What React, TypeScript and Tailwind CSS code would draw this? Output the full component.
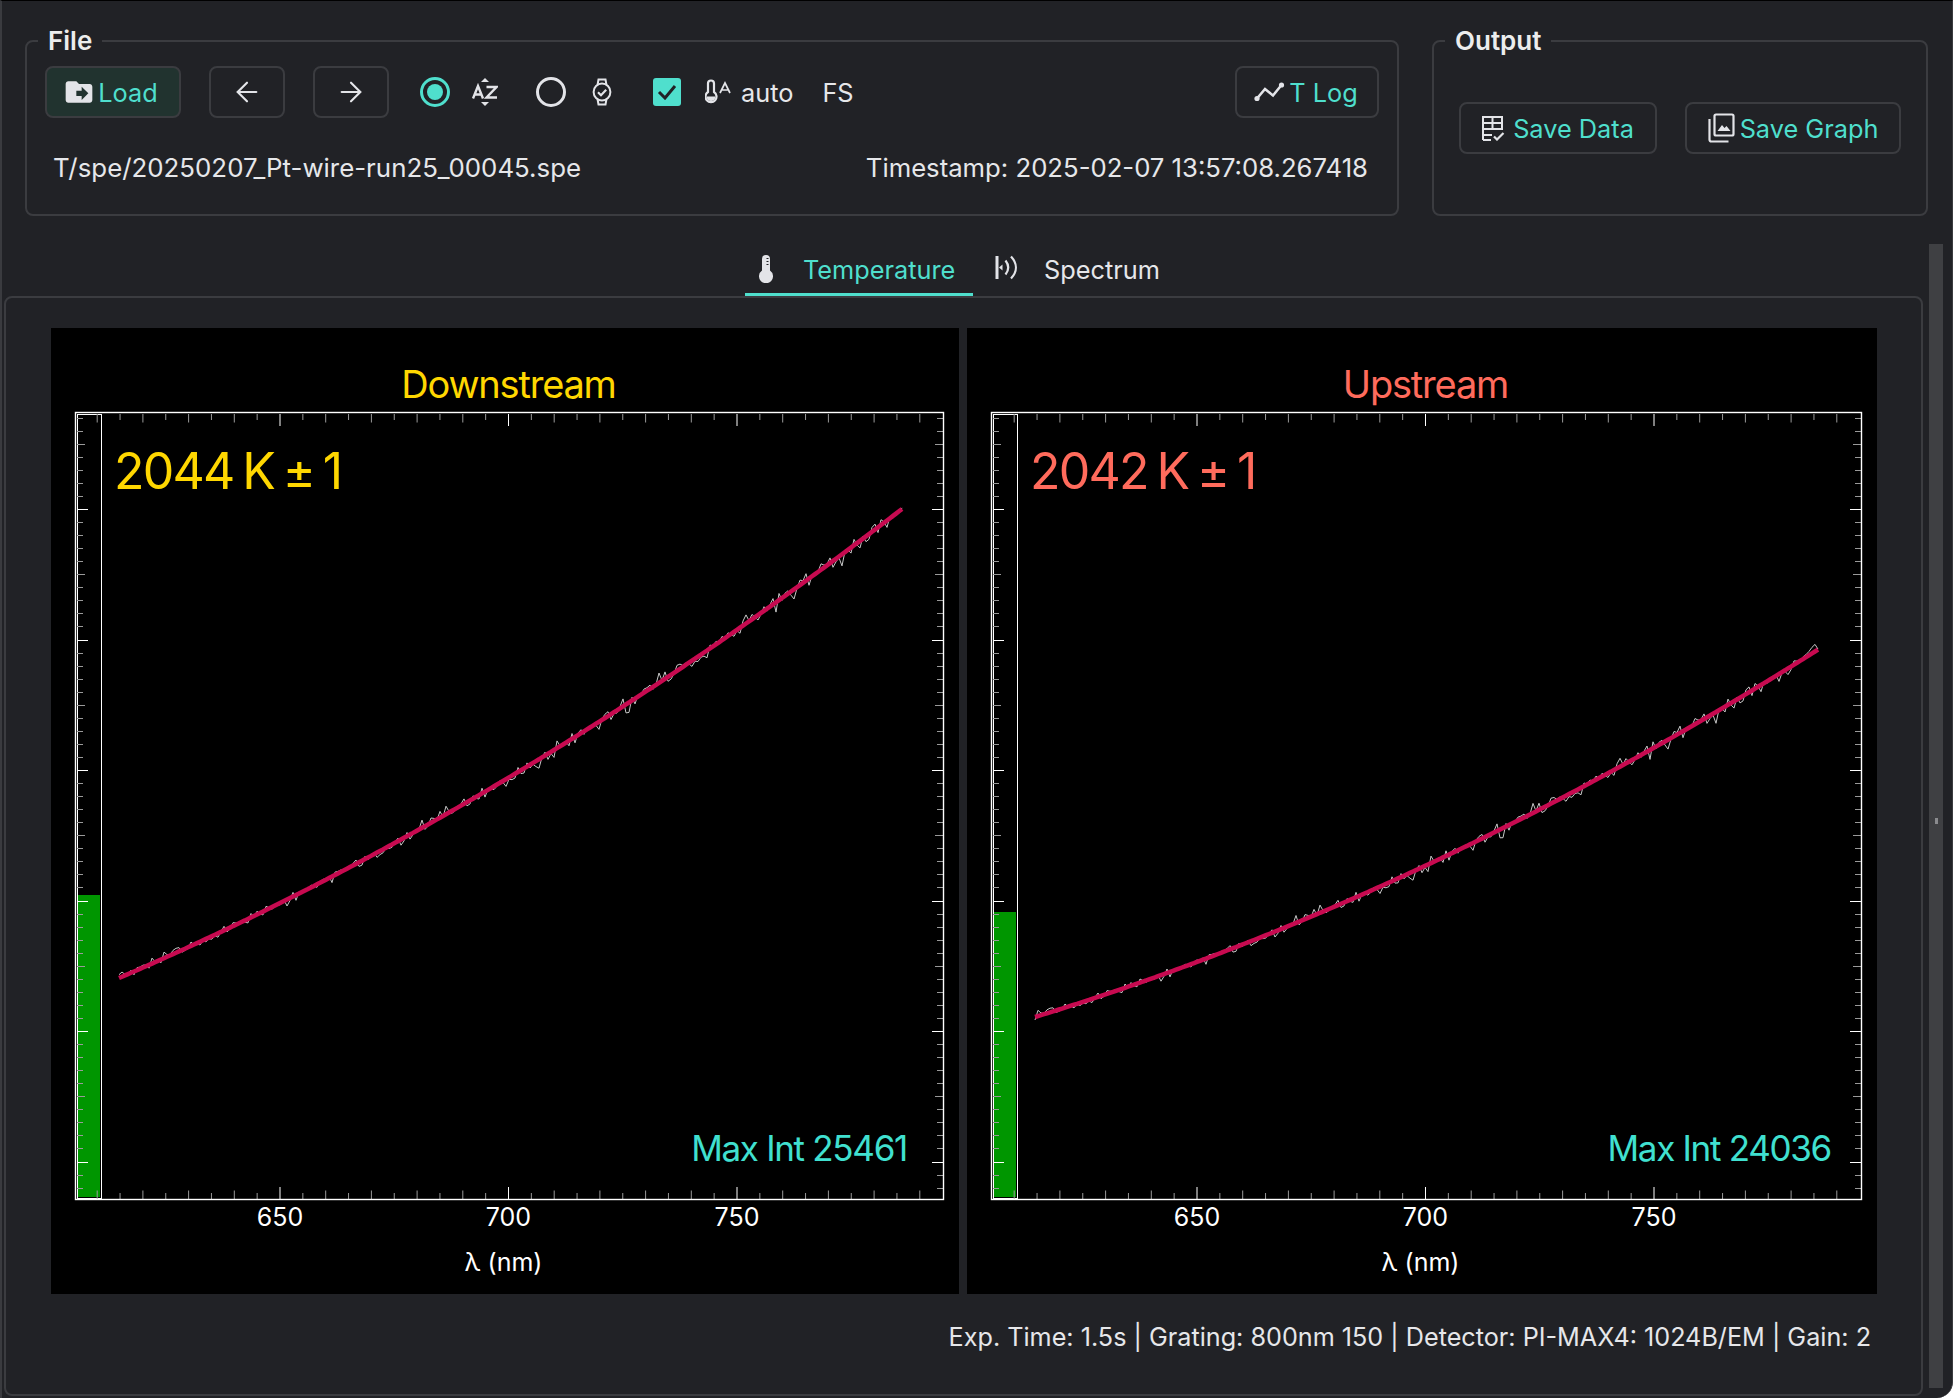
import { ArrowLeft, ArrowRight } from 'lucide-react'
import { MdDriveFileMove } from 'react-icons/md'
import type { ReactNode } from 'react'

// x position of a wavelength in plot coordinates
const nmToX = (nm: number, base: number) => base + (nm - 650) * 4.57

const noise = (i: number) => {
  const s = Math.sin(i * 12.9898) * 43758.5453
  return s - Math.floor(s) - 0.5
}

interface PlotProps {
  title: string
  color: string
  temp: string
  maxInt: string
  maxIntRight: number
  width: number
  frameRight: number
  tick650: number
  gaugeTop: number
  curve: { x0: number; y0: number; x1: number; y1: number; sag: number }
  seed: number
}

function Plot({ title, color, temp, maxInt, maxIntRight, width, frameRight, tick650, gaugeTop, curve, seed }: PlotProps) {
  const top = 84
  const bottom = 871
  const left = 24

  const fit = []
  const raw = []
  for (let x = curve.x0; x <= curve.x1; x += 3) {
    const t = (x - curve.x0) / (curve.x1 - curve.x0)
    const y = curve.y0 + (curve.y1 - curve.y0) * t + curve.sag * 4 * t * (1 - t)
    fit.push(`${x},${y.toFixed(1)}`)
    const big = noise(x + seed + 7) > 0.25 ? 1.6 : 1
    raw.push(`${x},${(y + 12 * big * (0.6 + 0.7 * t) * noise(x + seed)).toFixed(1)}`)
  }

  const xTicks = []
  for (let nm = 610; nm <= 790; nm += 5) {
    const x = nmToX(nm, tick650)
    const kind = nm % 50 === 0 ? 2 : nm % 10 === 0 ? 1 : 0
    const len = [6, 8.5, 12][kind]
    const stroke = kind === 2 ? '#fff' : '#9a9a9a'
    xTicks.push(<path key={nm} d={`M${x} ${bottom}v${-len}M${x} ${top + 2}v${len}`} stroke={stroke} fill="none" />)
  }

  const yTicks = []
  for (let k = -7; k <= 52; k++) {
    const y = Math.round(181 + k * 13.05) + 0.5
    const kind = (k + 100) % 10 === 0 ? 2 : (k + 100) % 5 === 0 ? 1 : 0
    const len = [6, 8, 11][kind]
    const stroke = kind === 2 ? '#fff' : '#9a9a9a'
    yTicks.push(<path key={k} d={`M${left + 2} ${y}h${len}M${frameRight - 1} ${y}h${-len}`} stroke={stroke} fill="none" />)
  }

  const center = (left + frameRight) / 2
  const font = { fontFamily: 'Inter, sans-serif' }

  return (
    <svg width={width} height={966} className="block bg-black shrink-0" style={font}>
      <text x={center - 1} y={70} textAnchor="middle" fontSize={38} fill={color} letterSpacing={-1.2}>{title}</text>

      <rect x={left + 3} y={gaugeTop} width={22} height={bottom - 2 - gaugeTop} fill="#009600" />
      <rect x={left + 2.5} y={top + 2.5} width={24} height={bottom - top - 3} fill="none" stroke="#fff" />
      {xTicks}
      {yTicks}
      <rect x={left + 0.5} y={top + 0.5} width={frameRight - left - 1} height={bottom - top} fill="none" stroke="#fff" strokeWidth={1.4} />

      <polyline points={raw.join(' ')} fill="none" stroke="#c8c8c8" strokeWidth={1} />
      <polyline points={fit.join(' ')} fill="none" stroke="#c70a50" strokeWidth={4.5} />

      <text x={63} y={161} fontSize={50} fill={color} letterSpacing={-1.8} wordSpacing={-3.5}>{temp}</text>
      <text x={maxIntRight} y={833} textAnchor="end" fontSize={35} fill="#40e0d0" letterSpacing={-1.3}>{maxInt}</text>

      {[650, 700, 750].map(nm => (
        <text key={nm} x={nmToX(nm, tick650)} y={898} textAnchor="middle" fontSize={25} fill="#fff">{nm}</text>
      ))}
      <text x={center - 6} y={943} textAnchor="middle" fontSize={25} fill="#fff">λ (nm)</text>
    </svg>
  )
}

function OutlineButton({ children, className = '' }: { children: ReactNode; className?: string }) {
  return (
    <button className={`h-[52px] flex items-center justify-center rounded-lg border-2 border-[#3b3c40] text-[#4fdfcd] shrink-0 ${className}`}>
      {children}
    </button>
  )
}

function Radio({ checked }: { checked?: boolean }) {
  return (
    <span className={`w-[30px] h-[30px] rounded-full border-[3px] flex items-center justify-center shrink-0 ${checked ? 'border-[#4fdfcd]' : 'border-[#e3e4e8]'}`}>
      {checked && <span className="w-4 h-4 rounded-full bg-[#4fdfcd]" />}
    </span>
  )
}

const SortAzIcon = () => (
  <svg width="26" height="28" viewBox="0 0 26 28" className="ml-[22px] shrink-0" fill="none" stroke="#e3e4e8" strokeWidth="2.4">
    <path d="M13 0l4 4H9zM13 28l-4-4h8z" fill="#e3e4e8" stroke="none" />
    <path d="M1 20.500L6 8l5 12.500M3 16.500h6" />
    <path d="M14.500 9h10l-10 10.500h10.500" />
  </svg>
)

const WatchCheckIcon = () => (
  <svg width="20" height="28" viewBox="0 0 20 28" className="ml-[26px] shrink-0" fill="none" stroke="#e3e4e8" strokeWidth="2">
    <circle cx="10" cy="14" r="8.4" />
    <path d="M5.500 7l1-5.500h7l1 5.500M5.500 21l1 5.500h7l1-5.500" />
    <path d="M6 14.200l3 3 5.200-5.400" strokeWidth="2.200" />
  </svg>
)

const ThermoAutoIcon = () => (
  <svg width="26" height="28" viewBox="0 0 26 28" className="ml-[24px] shrink-0" fill="none" stroke="#e3e4e8" strokeWidth="2.200">
    <path d="M3 14V5.500a3 3 0 0 1 6 0V14a5.500 5.500 0 1 1-6 0z" />
    <path d="M1.500 18.500a4.500 4.500 0 0 0 9 0z" fill="#e3e4e8" stroke="none" />
    <path d="M15 15L20 5l5 10M16.500 12h7" strokeWidth="1.700" />
  </svg>
)

const LogIcon = () => (
  <svg width="31" height="20" viewBox="0 0 31 20" className="shrink-0 mr-[4px]" fill="none" stroke="#e3e4e8" strokeWidth="2.600">
    <path d="M3 16.500L11 7l8 6.500L27.500 3" />
    <circle cx="3" cy="16.500" r="2.600" fill="#e3e4e8" stroke="none" />
    <circle cx="27.500" cy="3" r="2.600" fill="#e3e4e8" stroke="none" />
  </svg>
)

const SaveDataIcon = () => (
  <svg width="23" height="25" viewBox="0 0 23 25" className="shrink-0 mr-[8px]" fill="none" stroke="#e3e4e8" strokeWidth="2">
    <path d="M1 24V1h19v13M1 7h19M1 13h19M10.500 1v12M1 19h9M1 24h8" />
    <path d="M12 20.500l3 3 6.500-6.500" strokeWidth="2.200" />
  </svg>
)

const SaveGraphIcon = () => (
  <svg width="27" height="30" viewBox="0 0 27 30" className="shrink-0 mr-[5px]" fill="none" stroke="#e3e4e8" strokeWidth="2.200">
    <rect x="6.500" y="1.500" width="19" height="21" rx="1.500" />
    <path d="M1.500 6v20.500a2 2 0 0 0 2 2h17" />
    <path d="M9.500 18l4.500-6 2.500 3 2-2 4 5z" fill="#e3e4e8" stroke="none" />
  </svg>
)

const ThermoTabIcon = () => (
  <svg width="14" height="28" viewBox="0 0 14 28" className="shrink-0">
    <path d="M3 15.500V4a4 4 0 0 1 8 0v11.500a7 7 0 1 1-8 0z" fill="#e3e4e8" />
    <path d="M7.500 3.500h2M7.500 6.500h2M7.500 9.500h2" stroke="#212226" strokeWidth="1" />
  </svg>
)

const SpectrumTabIcon = () => (
  <svg width="23" height="25" viewBox="0 0 23 25" className="shrink-0 mb-[2px]" fill="none" stroke="#e3e4e8" strokeWidth="2.200">
    <path d="M2 1v23" strokeWidth="3" />
    <path d="M4 12.500l3.500-3v6z" fill="#e3e4e8" stroke="none" />
    <path d="M10.500 5.500c3.500 4.500 3.500 9.500 0 14M16 1.500c6.500 7 6.500 15 0 22" />
  </svg>
)

export default function App() {
  return (
    <div
      className="w-[1953px] h-[1398px] overflow-hidden bg-[#212226] border-t border-t-black border-l-2 border-l-[#3a3b3f] border-r border-r-[#3a3b3f] rounded-br-2xl text-[#e6e7ea] text-[25.3px] leading-8 flex flex-col"
      style={{ fontFamily: 'Inter, sans-serif' }}
    >
      <div className="flex pl-[23px] gap-[33px] pt-[25px] shrink-0">
        <fieldset className="w-[1374px] h-[190px] border-2 border-[#3b3c40] rounded-lg pl-[18px] pr-[18px] shrink-0">
          <legend className="-ml-[7px] px-[10px] font-semibold text-[26px] leading-[30px] text-[#eceded]">File</legend>
          <div className="flex items-center mt-[10px]">
            <OutlineButton className="w-[136px] bg-[#21332f] pr-[5px]">
              <MdDriveFileMove className="text-[#e3e4e8] w-[32px] h-[32px] mr-[3px]" />
              <span className="pt-[2px]">Load</span>
            </OutlineButton>
            <OutlineButton className="w-[76px] ml-[28px]">
              <ArrowLeft size={32} strokeWidth={1.6} color="#e3e4e8" />
            </OutlineButton>
            <OutlineButton className="w-[76px] ml-[28px]">
              <ArrowRight size={32} strokeWidth={1.6} color="#e3e4e8" />
            </OutlineButton>
            <span className="ml-[31px]"><Radio checked /></span>
            <SortAzIcon />
            <span className="ml-[38px]"><Radio /></span>
            <WatchCheckIcon />
            <span className="ml-[41px] w-[28px] h-[28px] rounded-[3px] bg-[#4fdfcd] flex items-center justify-center shrink-0">
              <svg width="20" height="16" viewBox="0 0 20 16" fill="none" stroke="#212226" strokeWidth="3">
                <path d="M2 8l6 6L18 2" />
              </svg>
            </span>
            <ThermoAutoIcon />
            <span className="ml-[10px] pt-[2px]">auto</span>
            <span className="ml-[29px] pt-[2px]">FS</span>
            <OutlineButton className="w-[144px] ml-auto pr-[2px]">
              <LogIcon />
              <span className="pt-[2px]">T Log</span>
            </OutlineButton>
          </div>
          <div className="flex justify-between mt-[34px] pl-[8px] pr-[11px] text-[25.7px]">
            <span className="text-[25.85px]">T/spe/20250207_Pt-wire-run25_00045.spe</span>
            <span>Timestamp: 2025-02-07 13:57:08.267418</span>
          </div>
        </fieldset>

        <fieldset className="w-[496px] h-[190px] border-2 border-[#3b3c40] rounded-lg shrink-0">
          <legend className="ml-[11px] px-[10px] font-semibold text-[26px] leading-[30px] text-[#eceded]">Output</legend>
          <div className="flex mt-[46px] pl-[25px]">
            <OutlineButton className="w-[198px]">
              <SaveDataIcon />
              <span className="pt-[2px]">Save Data</span>
            </OutlineButton>
            <OutlineButton className="w-[216px] ml-[28px]">
              <SaveGraphIcon />
              <span className="pt-[2px]">Save Graph</span>
            </OutlineButton>
          </div>
        </fieldset>
      </div>

      <div className="flex flex-1 mt-[28px] min-h-0">
        <div className="w-[1921px] pl-[2px] flex flex-col shrink-0">
          <div className="h-[52px] flex items-end pl-[741px] shrink-0">
            <div className="w-[228px] h-[52px] flex items-center pl-[14px] gap-[30px] border-b-[3px] border-b-[#4fdfcd] text-[#4fdfcd]">
              <ThermoTabIcon />
              <span className="pt-[2px]">Temperature</span>
            </div>
            <div className="h-[52px] flex items-center pl-[22px] gap-[26px] pb-[3px]">
              <SpectrumTabIcon />
              <span className="pt-[2px]">Spectrum</span>
            </div>
          </div>
          <div className="h-[1100px] border-2 border-[#3b3c40] rounded-lg flex flex-col pt-[30px] pl-[45px] pr-[45px]">
            <div className="flex gap-2">
              <Plot
                title="Downstream"
                color="#ffd700"
                temp="2044 K ± 1"
                maxInt="Max Int 25461"
                maxIntRight={856}
                width={908}
                frameRight={893}
                tick650={229}
                gaugeTop={567}
                curve={{ x0: 68, y0: 650, x1: 851, y1: 181, sag: 33 }}
                seed={11}
              />
              <Plot
                title="Upstream"
                color="#ff6b5c"
                temp="2042 K ± 1"
                maxInt="Max Int 24036"
                maxIntRight={864}
                width={910}
                frameRight={895}
                tick650={230}
                gaugeTop={584}
                curve={{ x0: 68, y0: 689, x1: 852, y1: 321, sag: 32 }}
                seed={53}
              />
            </div>
            <div className="text-right mt-[27px] pr-[5px] text-[25.2px] leading-8">
              Exp. Time: 1.5s | Grating: 800nm 150 | Detector: PI-MAX4: 1024B/EM | Gain: 2
            </div>
          </div>
        </div>
        <div className="w-[14px] ml-[6px] mb-[10px] bg-[#3f4043] flex items-center justify-center shrink-0">
          <span className="w-[3px] h-[6px] mt-[10px] bg-[#8a8b8e]" />
        </div>
      </div>
    </div>
  )
}
